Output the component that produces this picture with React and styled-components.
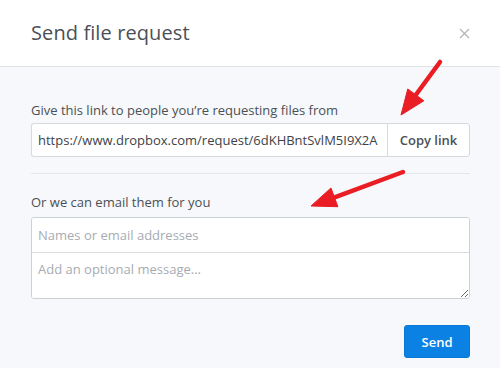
import styled, { createGlobalStyle } from 'styled-components';

const GlobalStyle = createGlobalStyle`
    html, body {
        margin: 0;
        padding: 0;
        background: #f6f8fb;
    }
    * {
        box-sizing: border-box;
    }
`;

const Modal = styled.div`
    position: relative;
    width: 500px;
    height: 368px;
    overflow: hidden;
    font-family: "Open Sans", "Liberation Sans", sans-serif;
    color: #4b5056;
    background: #f6f8fb;
`;

const Header = styled.div`
    height: 67px;
    padding: 0 31px;
    display: flex;
    align-items: center;
    justify-content: space-between;
    background: #fff;
    border-bottom: 1px solid #dfe3e8;
`;

const Title = styled.h1`
    margin: 0 0 1px;
    font-size: 20px;
    font-weight: 400;
    color: #4b5056;
    letter-spacing: 0.1px;
`;

const Close = styled.button`
    border: none;
    background: none;
    padding: 0;
    margin-right: -2px;
    width: 14px;
    height: 14px;
    display: flex;
    align-items: center;
    justify-content: center;
    cursor: pointer;
`;

const Body = styled.div`
    padding: 34px 30px 0 31px;
    display: flex;
    flex-direction: column;
`;

const Label = styled.div`
    font-size: 13px;
    line-height: 18px;
    color: #4b5056;
    margin-bottom: ${(p) => p.$gap || 4}px;
`;

const LinkRow = styled.div`
    display: flex;
    height: 34px;
`;

const LinkInput = styled.input`
    flex: 1;
    min-width: 0;
    height: 100%;
    padding: 0 6px;
    font-family: inherit;
    font-size: 13px;
    color: #3e4247;
    background: #fff;
    border: 1px solid #d6dadf;
    border-right: none;
    border-radius: 3px 0 0 3px;
    outline: none;
`;

const CopyButton = styled.button`
    width: 83px;
    height: 100%;
    padding: 0;
    font-family: inherit;
    font-size: 13px;
    font-weight: 600;
    color: #4b5056;
    background: #fff;
    border: 1px solid #d6dadf;
    border-radius: 0 3px 3px 0;
    cursor: pointer;
`;

const Divider = styled.hr`
    margin: 16px 0 19px;
    border: none;
    border-top: 1px solid #e3e7eb;
`;

const EmailBox = styled.div`
    display: flex;
    flex-direction: column;
    background: #fff;
    border: 1px solid #ccd1d6;
    border-radius: 3px;
    overflow: hidden;
`;

const EmailInput = styled.input`
    height: 35px;
    padding: 0 6px;
    font-family: inherit;
    font-size: 13px;
    color: #3e4247;
    border: none;
    border-bottom: 1px solid #dadee3;
    outline: none;
    &::placeholder {
        color: #a7acb2;
    }
`;

const Message = styled.textarea`
    display: block;
    height: 45px;
    padding: 7px 6px;
    font-family: inherit;
    font-size: 13px;
    color: #3e4247;
    border: none;
    outline: none;
    resize: vertical;
    &::placeholder {
        color: #a7acb2;
    }
`;

const Footer = styled.div`
    display: flex;
    justify-content: flex-end;
    margin-top: 26px;
`;

const SendButton = styled.button`
    width: 66px;
    height: 33px;
    padding: 0;
    font-family: inherit;
    font-size: 13px;
    font-weight: 600;
    color: #fff;
    background: #0c81e4;
    border: 1px solid #0a78d6;
    border-radius: 3px;
    cursor: pointer;
`;

const Annotations = styled.svg`
    position: absolute;
    left: 0;
    top: 0;
    pointer-events: none;
`;

const Arrow = ({ x1, y1, x2, y2 }) => {
    const ang = Math.atan2(y2 - y1, x2 - x1);
    const len = 25;
    const half = 10;
    const bx = x2 - Math.cos(ang) * len;
    const by = y2 - Math.sin(ang) * len;
    const px = -Math.sin(ang) * half;
    const py = Math.cos(ang) * half;
    const sx = x2 - Math.cos(ang) * (len - 2);
    const sy = y2 - Math.sin(ang) * (len - 2);
    return (
        <g fill="#ea1c24" stroke="#ea1c24">
            <line x1={x1} y1={y1} x2={sx} y2={sy} strokeWidth="4.5" strokeLinecap="round" />
            <polygon points={`${x2},${y2} ${bx + px},${by + py} ${bx - px},${by - py}`} strokeWidth="1" strokeLinejoin="round" />
        </g>
    );
};

const App = () => {
    return (
        <>
            <GlobalStyle />
            <Modal>
                <Header>
                    <Title>Send file request</Title>
                    <Close aria-label="Close">
                        <svg width="11" height="11" viewBox="0 0 11 11">
                            <path d="M1 1 L10 10 M10 1 L1 10" stroke="#b3b8be" strokeWidth="1.4" />
                        </svg>
                    </Close>
                </Header>
                <Body>
                    <Label>Give this link to people you’re requesting files from</Label>
                    <LinkRow>
                        <LinkInput readOnly value="https://www.dropbox.com/request/6dKHBntSvlM5I9X2A" />
                        <CopyButton>Copy link</CopyButton>
                    </LinkRow>
                    <Divider />
                    <Label $gap={6}>Or we can email them for you</Label>
                    <EmailBox>
                        <EmailInput placeholder="Names or email addresses" />
                        <Message placeholder="Add an optional message..." />
                    </EmailBox>
                    <Footer>
                        <SendButton>Send</SendButton>
                    </Footer>
                </Body>
                <Annotations width="500" height="368">
                    <Arrow x1={440} y1={62} x2={401} y2={115} />
                    <Arrow x1={403} y1={172} x2={311} y2={206} />
                </Annotations>
            </Modal>
        </>
    );
};

export default App;
